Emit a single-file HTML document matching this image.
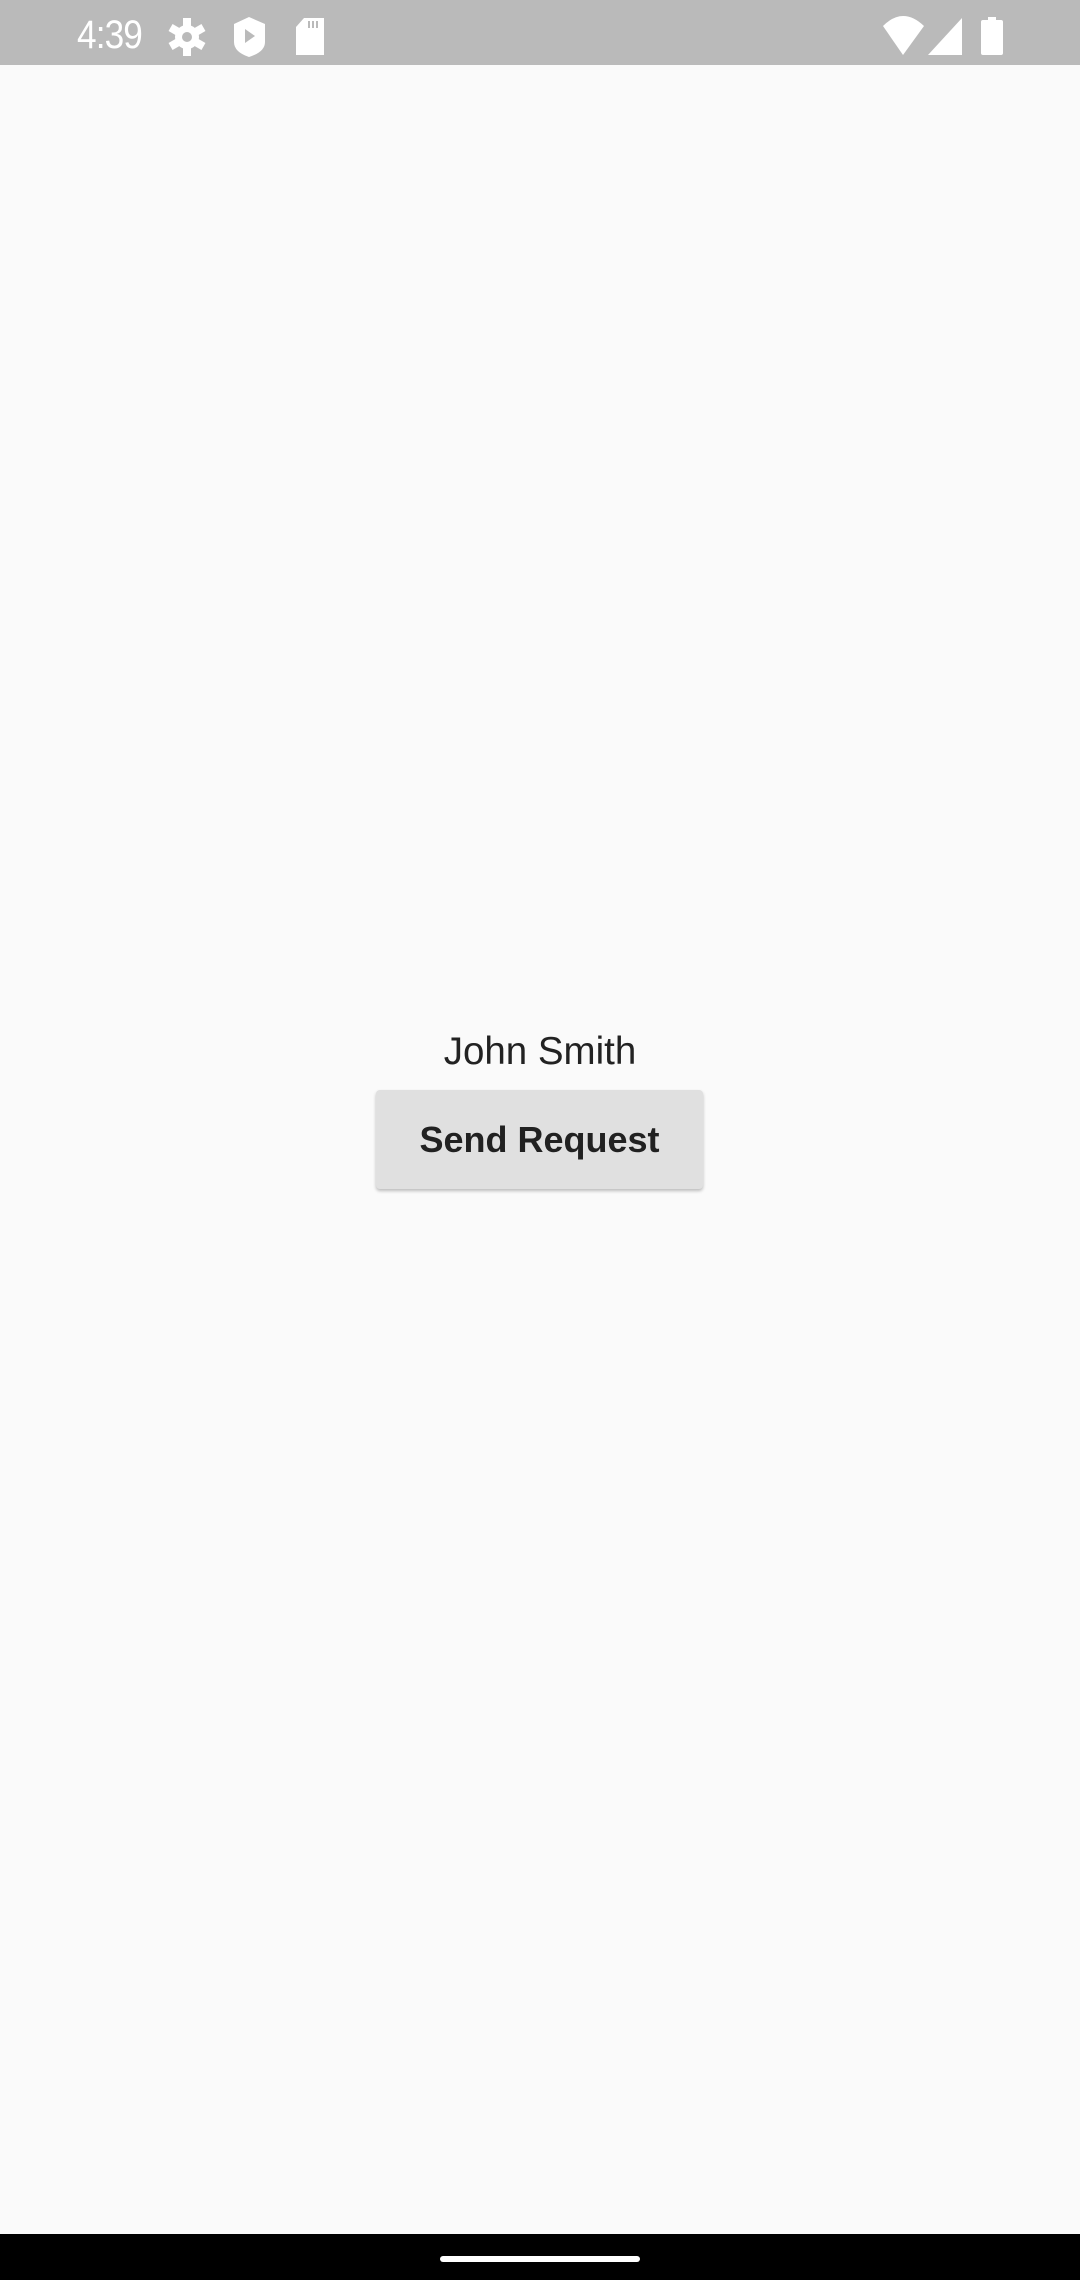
<!DOCTYPE html>
<html><head><meta charset="utf-8"><style>
html,body{margin:0;padding:0;}
body{width:1080px;height:2280px;background:#fafafa;position:relative;overflow:hidden;font-family:"Liberation Sans",sans-serif;}
.sb{position:absolute;left:0;top:0;width:1080px;height:65px;background:#bababa;}
.time{position:absolute;left:77px;top:15px;font-size:40px;line-height:40px;color:#fff;letter-spacing:-1px;transform:scaleX(0.88);transform-origin:left;}
.name{position:absolute;left:0;width:1080px;top:1030px;text-align:center;font-size:38.5px;color:#222;}
.btn{position:absolute;left:376px;top:1090px;width:327px;height:99px;background:#e0e0e0;border-radius:4px;box-shadow:0 2px 3px rgba(0,0,0,0.25);text-align:center;line-height:99px;font-size:36px;font-weight:bold;color:#212121;}
.nav{position:absolute;left:0;top:2234px;width:1080px;height:46px;background:#000;}
.pill{position:absolute;left:440px;top:2256px;width:200px;height:6px;border-radius:3px;background:#fff;}
</style></head><body>
<div class="sb">
<div class="time">4:39</div>
<svg style="position:absolute;left:0;top:0" width="1080" height="65" fill="#fff">
<g transform="translate(187,37)">
<circle r="12"/>
<rect x="-4" y="-19" width="8" height="38"/>
<rect x="-4" y="-19" width="8" height="38" transform="rotate(60)"/>
<rect x="-4" y="-19" width="8" height="38" transform="rotate(120)"/>
<circle r="5" fill="#bababa"/></g>
<path d="M234,24 L249,17 L265,24 L265,42 Q265,52 249,57 Q234,52 234,42 Z"/>
<path d="M245,29 L255,36 L245,43 Z" fill="#bababa"/>
<path d="M304,18 h20 v37 h-28 v-28 z"/>
<rect x="308" y="21" width="2" height="7" fill="#bababa"/><rect x="312" y="21" width="2" height="7" fill="#bababa"/><rect x="316" y="21" width="2" height="7" fill="#bababa"/>
<path d="M883,26 Q903,6 924,26 L903,55 Z"/>
<path d="M962,18 L962,55 L928,55 Z"/>
<rect x="988" y="17" width="8" height="4"/>
<rect x="981" y="20" width="22" height="35" rx="2"/>
</svg>
</div>
<div class="name">John Smith</div>
<div class="btn">Send Request</div>
<div class="nav"></div>
<div class="pill"></div>
</body></html>
